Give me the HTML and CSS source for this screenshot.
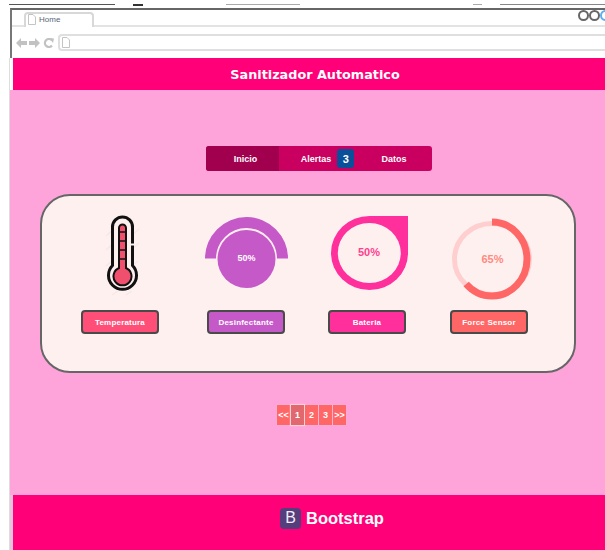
FILE: index.html
```html
<!DOCTYPE html>
<html lang="es">
<head>
<meta charset="utf-8">
<title>Sanitizador Automatico</title>
<link rel="stylesheet" href="styles.css">
</head>
<body>
<div class="edge-strip">
  <span class="edge edge-a"></span>
  <span class="edge edge-b"></span>
  <span class="edge edge-c"></span>
  <span class="edge edge-d"></span>
  <span class="edge edge-e"></span>
</div>
<div class="window">
  <div class="chrome">
    <div class="tabbar">
      <div class="tab">
        <svg class="page-glyph" viewBox="0 0 8 11"><path d="M.5.5h4.500l2.500 2.500v7.500H.5z"/></svg>
        <span>Home</span>
      </div>
      <div class="controls">
        <span class="dot"></span><span class="dot"></span><span class="dot dot-blue"></span>
      </div>
    </div>
    <div class="toolbar">
      <svg class="nav-glyphs" viewBox="0 0 38 10">
        <path d="M0 5l5-5v3h6v4H5v3z"/>
        <path d="M24 5l-5-5v3h-6v4h6v3z"/>
        <path class="reload" d="M36 2.500A4 4 0 1 0 36 7.500"/>
        <path d="M33.500 0l4.500 .5-1 4.500z"/>
      </svg>
      <div class="omnibox">
        <svg class="page-glyph" viewBox="0 0 8 11"><path d="M.5.5h4.500l2.500 2.500v7.500H.5z"/></svg>
      </div>
    </div>
  </div>
  <main class="page">
    <header class="page-head"><span class="page-title">Sanitizador Automatico</span></header>
    <div class="page-body">
      <nav class="pills">
        <a class="pill pill-active">Inicio</a>
        <a class="pill pill-alerts">Alertas <span class="badge">3</span></a>
        <a class="pill pill-data">Datos</a>
      </nav>
      <section class="card">
        <div class="sensor">
          <svg class="gauge" viewBox="70 205 100 100">
            <path class="th-shade" d="M106 236l8-7M106 250l8-7M131 236l8-7M131 250l8-7M106 266l6-5M132 266l6-5M112 295l6-4M126 295l6-4"/>
            <path class="th-outer" d="M112.500 227a10 10 0 0 1 20 0v38.500a14 14 0 1 1-20 0z"/>
            <path class="th-inner" d="M119 228a3.500 3.500 0 0 1 7 0v40a9 9 0 1 1-7 0z"/>
            <path class="th-tick" d="M119.500 232h6M119.500 241h6M119.500 250h6M119.500 259h6"/>
            <path class="th-mark" d="M130 244.500h4"/>
          </svg>
          <button class="tag tag-temp">Temperatura</button>
        </div>
        <div class="sensor">
          <svg class="gauge" viewBox="196 205 100 100">
            <path class="arc-bg" d="M205 258.500a41.500 41.500 0 0 1 83 0h-11a30.500 30.500 0 0 0-61 0z"/>
            <circle class="arc-core" cx="246.500" cy="259" r="29"/>
            <text class="arc-label" x="246.500" y="261">50%</text>
          </svg>
          <button class="tag tag-dis">Desinfectante</button>
        </div>
        <div class="sensor">
          <svg class="gauge" viewBox="317 205 100 100">
            <path class="drop" d="M369.500 216H408V253A38.500 37 0 1 1 369.500 216z"/>
            <ellipse class="drop-hole" cx="369.300" cy="253" rx="31.500" ry="30"/>
            <text class="drop-label" x="369" y="256">50%</text>
          </svg>
          <button class="tag tag-bat">Bateria</button>
        </div>
        <div class="sensor">
          <svg class="gauge" viewBox="439 205 100 100">
            <ellipse class="ring-bg" cx="492" cy="259" rx="37.500" ry="35.500"/>
            <ellipse class="ring-value" cx="492" cy="259" rx="37" ry="35" pathLength="100" stroke-dasharray="63 100" transform="rotate(-90 492 259)"/>
            <text class="ring-label" x="492.500" y="263">65%</text>
          </svg>
          <button class="tag tag-force">Force Sensor</button>
        </div>
      </section>
      <nav class="pager">
        <a class="page-link">&lt;&lt;</a>
        <a class="page-link page-current">1</a>
        <a class="page-link">2</a>
        <a class="page-link">3</a>
        <a class="page-link">&gt;&gt;</a>
      </nav>
    </div>
    <footer class="page-foot">
      <span class="brand-mark">B</span>
      <span class="brand-name">Bootstrap</span>
    </footer>
  </main>
</div>
</body>
</html>
```

FILE: styles.css
```css
* { box-sizing: border-box; }

html, body {
  margin: 0;
  width: 605px;
  height: 550px;
  overflow: hidden;
  background: #fff;
  font-family: "Liberation Sans", Arial, sans-serif;
}

/* Thin leftover lines above the browser frame */
.edge-strip {
  height: 8px;
  display: flex;
  align-items: flex-start;
  padding: 4px 0 0 9px;
}
.edge { height: 1px; background: #555; flex: none; }
.edge-a { width: 106px; margin-right: 18px; }
.edge-b { width: 10px; height: 2px; background: #333; margin-right: 83px; }
.edge-c { width: 74px; background: #aaa; margin-right: 173px; }
.edge-d { width: 9px; background: #aaa; margin-right: 18px; }
.edge-e { width: 105px; background: #888; }

.window {
  margin-left: 10px;
  height: 542px;
  display: flex;
  flex-direction: column;
}

/* Browser frame: tab strip and address bar */
.chrome {
  border-top: 2px solid #666;
  border-left: 2px solid #777;
}
.tabbar {
  height: 17px;
  padding-left: 12px;
  border-bottom: 2px solid #e3e3e3;
  display: flex;
  justify-content: space-between;
  align-items: flex-start;
}
.tab {
  width: 70px;
  height: 15px;
  margin-top: 2px;
  padding: 0 0 3px 2px;
  border: 2px solid #d8d8d8;
  border-bottom: 0;
  border-radius: 4px 4px 0 0;
  background: #fff;
  display: flex;
  align-items: center;
  gap: 3px;
  font-size: 8px;
  color: #5a6478;
}
.page-glyph { width: 8px; height: 11px; flex: none; display: block; }
.page-glyph path { fill: #fff; stroke: #c4c4c4; stroke-width: 1; }

.controls {
  display: flex;
  width: 27px;
  flex: none;
}
.dot {
  width: 11px;
  height: 11px;
  border: 2px solid #666;
  border-radius: 50%;
  flex: none;
}
.dot-blue { border-color: #5ab0f0; }

.toolbar {
  height: 31px;
  padding: 7px 0 0 4px;
  display: flex;
  align-items: flex-start;
  gap: 4px;
}
.nav-glyphs { width: 38px; height: 10px; margin-top: 4px; flex: none; }
.nav-glyphs path { fill: #c2c2c2; }
.nav-glyphs .reload { fill: none; stroke: #c2c2c2; stroke-width: 2.200; }
.omnibox {
  flex: 1;
  height: 17px;
  border: 2px solid #dfdfdf;
  border-right: 0;
  border-radius: 4px 0 0 4px;
  padding: 1px 0 0 2px;
}

.page {
  flex: 1;
  display: flex;
  flex-direction: column;
  background: #ffa4da;
  box-shadow: -1px 0 0 #ddd;
}
.page-head {
  height: 32px;
  border-left: 3px solid #fff;
  background: #ff0078;
  color: #fff;
  font-family: "DejaVu Sans", sans-serif;
  font-size: 12.800px;
  font-weight: 700;
  text-align: center;
  line-height: 33px;
  padding-left: 12px;
}
.page-body {
  flex: 1;
  display: flex;
  flex-direction: column;
  align-items: flex-start;
  padding-top: 56px;
}

.pills {
  margin-left: 196px;
  width: 226px;
  height: 25px;
  border-radius: 3px;
  background: #c90060;
  display: flex;
  overflow: hidden;
  color: #fff;
  font-size: 9px;
  font-weight: 700;
}
.pill {
  display: flex;
  align-items: center;
  justify-content: center;
}
.pill-active { width: 73px; background: #a0004e; padding-left: 6px; }
.pill-alerts { width: 83px; gap: 6px; padding-left: 14px; }
.pill-data { width: 70px; padding-right: 6px; }
.badge {
  width: 17px;
  height: 19px;
  flex: none;
  border-radius: 3px;
  background: #0a4f9a;
  font-size: 11px;
  font-weight: 700;
  display: flex;
  align-items: center;
  justify-content: center;
}

.card {
  margin: 23px 0 0 30px;
  width: 536px;
  height: 179px;
  background: #fff0f0;
  border: 2px solid #666;
  border-radius: 30px;
  padding: 9px 0 0 39px;
  display: grid;
  grid-template-columns: 126px 121px 122px 78px;
  align-content: start;
}
.sensor {
  width: 78px;
  display: flex;
  flex-direction: column;
  align-items: center;
  gap: 5px;
}
.gauge { width: 100px; height: 100px; flex: none; }

.th-shade { fill: none; stroke: #f6e8e8; stroke-width: 1.500; }
.th-outer { fill: #fff0f0; stroke: #111; stroke-width: 3; }
.th-inner { fill: #f0506e; stroke: #111; stroke-width: 2; }
.th-tick { fill: none; stroke: #111; stroke-width: 1.500; }
.th-mark { fill: none; stroke: #fff0f0; stroke-width: 2; }

.arc-bg, .arc-core { fill: #c659c8; }
.arc-label { fill: #fff; font-size: 9px; font-weight: 700; text-anchor: middle; }

.drop { fill: #ff2f9c; }
.drop-hole { fill: #fff0f0; }
.drop-label { fill: #ff3f8f; font-size: 11px; font-weight: 700; text-anchor: middle; }

.ring-bg { fill: none; stroke: #ffcfcf; stroke-width: 5; }
.ring-value { fill: none; stroke: #ff6666; stroke-width: 7; }
.ring-label { fill: #ff8a80; font-size: 11px; font-weight: 700; text-anchor: middle; }

.tag {
  width: 78px;
  height: 24px;
  padding: 0;
  border: 2px solid #4a4a4a;
  border-radius: 4px;
  color: #fff;
  font-family: "Liberation Sans", Arial, sans-serif;
  font-size: 8px;
  font-weight: 700;
  letter-spacing: .2px;
}
.tag-temp { background: #ff4f78; }
.tag-dis { background: #c659c8; }
.tag-bat { background: #ff2f9c; }
.tag-force { background: #ff6666; }

.pager {
  margin: 32px 0 0 267px;
  display: flex;
  gap: 1px;
}
.page-link {
  width: 13px;
  height: 20px;
  background: #ff6666;
  color: #fff;
  font-size: 9px;
  font-weight: 700;
  display: flex;
  align-items: center;
  justify-content: center;
  box-shadow: 0 0 1px #ffd0d0;
}
.page-current { background: #e0686e; box-shadow: 0 0 1px 1px #ffd0d8; }

.page-foot {
  height: 55px;
  border-left: 3px solid #e6c2dc;
  background: #ff0078;
  display: flex;
  align-items: center;
  justify-content: flex-start;
  gap: 5px;
  padding: 0 0 9px 267px;
}
.brand-mark {
  width: 21px;
  height: 21px;
  border-radius: 4px;
  background: #563d7c;
  color: #f2ecf8;
  font-size: 16px;
  display: flex;
  align-items: center;
  justify-content: center;
}
.brand-name {
  color: #fff;
  font-size: 16.500px;
  font-weight: 700;
}
```
